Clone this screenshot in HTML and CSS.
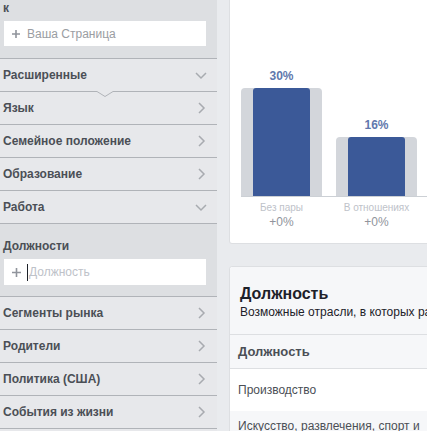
FILE: index.html
```html
<!DOCTYPE html>
<html lang="ru">
<head>
<meta charset="utf-8">
<title>Аудитория</title>
<link rel="stylesheet" href="styles.css">
</head>
<body>
<div class="page">
  <aside class="sidebar">
    <div class="section top-section">
      <div class="section-label">к</div>
      <div class="field">
        <svg class="plus" width="8" height="8" viewBox="0 0 8 8"><path d="M4 0v8M0 4h8" stroke="#90949c" stroke-width="1.6"/></svg>
        <span class="ph">Ваша Страница</span>
      </div>
    </div>
    <div class="row">Расширенные
      <svg class="chev" width="12" height="12" viewBox="0 0 12 12"><polyline points="1,4 6,9 11,4" fill="none" stroke="#a8abb0" stroke-width="1.5"/></svg>
      <svg class="notch" width="18" height="7" viewBox="0 0 18 7"><polygon points="0,0 18,0 18,1 9,6 0,1" fill="#e7e8eb"/><polyline points="0,0.5 1,0.5 9,5.5 17,0.5 18,0.5" fill="none" stroke="#b0b3b8" stroke-width="1"/></svg>
    </div>
    <div class="row">Язык
      <svg class="chev" width="12" height="12" viewBox="0 0 12 12"><polyline points="4,1 9,6 4,11" fill="none" stroke="#a8abb0" stroke-width="1.5"/></svg>
    </div>
    <div class="row">Семейное положение
      <svg class="chev" width="12" height="12" viewBox="0 0 12 12"><polyline points="4,1 9,6 4,11" fill="none" stroke="#a8abb0" stroke-width="1.5"/></svg>
    </div>
    <div class="row">Образование
      <svg class="chev" width="12" height="12" viewBox="0 0 12 12"><polyline points="4,1 9,6 4,11" fill="none" stroke="#a8abb0" stroke-width="1.5"/></svg>
    </div>
    <div class="row">Работа
      <svg class="chev" width="12" height="12" viewBox="0 0 12 12"><polyline points="1,4 6,9 11,4" fill="none" stroke="#a8abb0" stroke-width="1.5"/></svg>
    </div>
    <div class="section jobs-section">
      <div class="section-label big">Должности</div>
      <div class="field tall">
        <svg class="plus" width="9" height="9" viewBox="0 0 9 9"><path d="M4.5 0v9M0 4.5h9" stroke="#90949c" stroke-width="1.6"/></svg>
        <span class="caret"></span><span class="ph light">Должность</span>
      </div>
    </div>
    <div class="row">Сегменты рынка
      <svg class="chev" width="12" height="12" viewBox="0 0 12 12"><polyline points="4,1 9,6 4,11" fill="none" stroke="#a8abb0" stroke-width="1.5"/></svg>
    </div>
    <div class="row">Родители
      <svg class="chev" width="12" height="12" viewBox="0 0 12 12"><polyline points="4,1 9,6 4,11" fill="none" stroke="#a8abb0" stroke-width="1.5"/></svg>
    </div>
    <div class="row">Политика (США)
      <svg class="chev" width="12" height="12" viewBox="0 0 12 12"><polyline points="4,1 9,6 4,11" fill="none" stroke="#a8abb0" stroke-width="1.5"/></svg>
    </div>
    <div class="row">События из жизни
      <svg class="chev" width="12" height="12" viewBox="0 0 12 12"><polyline points="4,1 9,6 4,11" fill="none" stroke="#a8abb0" stroke-width="1.5"/></svg>
    </div>
  </aside>

  <main class="content">
    <section class="card chart-card">
      <div class="bars">
        <div class="bar-group">
          <div class="pct">30%</div>
          <div class="bar-bg" style="height:108px"><div class="bar"></div></div>
        </div>
        <div class="bar-group">
          <div class="pct">16%</div>
          <div class="bar-bg" style="height:59px"><div class="bar"></div></div>
        </div>
      </div>
      <div class="labels">
        <div class="label"><div class="cat">Без пары</div><div class="delta">+0%</div></div>
        <div class="label"><div class="cat">В отношениях</div><div class="delta">+0%</div></div>
      </div>
    </section>

    <section class="card table-card">
      <div class="tc-head">
        <div class="tc-title">Должность</div>
        <div class="tc-sub">Возможные отрасли, в которых ра</div>
      </div>
      <div class="th">Должность</div>
      <div class="tr">Производство</div>
      <div class="tr alt">Искусство, развлечения, спорт и медиа</div>
    </section>
  </main>
</div>
</body>
</html>
```

FILE: styles.css
```css
* { box-sizing: content-box; }

body {
  margin: 0;
  background: #e9ebee;
  font-family: "Liberation Sans", Arial, sans-serif;
  overflow: hidden;
}

.page {
  display: flex;
  width: 427px;
  height: 431px;
  overflow: hidden;
}

/* Sidebar */
.sidebar {
  width: 217px;
  flex-shrink: 0;
  background: #e7e8eb;
}

.section {
  background: #dddfe2;
  border-bottom: 1px solid #b0b3b8;
  padding: 2px 11px 12px 4px;
}

.jobs-section {
  padding: 14px 11px 11px 4px;
}

.section-label {
  font-weight: bold;
  font-size: 12px;
  line-height: 12px;
  color: #4b4f56;
  margin-left: -1px;
}

.section-label.big {
  line-height: 16px;
}

.field {
  background: #fff;
  height: 25px;
  margin-top: 7px;
  display: flex;
  align-items: center;
  padding-left: 8px;
  font-size: 12px;
}

.field.tall {
  height: 26px;
  margin-top: 5px;
}

.plus {
  margin-right: 7px;
  flex-shrink: 0;
}

.field.tall .plus {
  margin-right: 6px;
}

.caret {
  width: 1px;
  height: 17px;
  background: #1d2129;
  margin-right: 1px;
}

.ph {
  color: #9a9da2;
}

.ph.light {
  color: #bec2c9;
}

.row {
  position: relative;
  height: 32px;
  border-bottom: 1px solid #b0b3b8;
  display: flex;
  align-items: center;
  justify-content: space-between;
  padding: 0 10px 0 3px;
  font-weight: bold;
  font-size: 12px;
  color: #4b4f56;
}

.notch {
  position: absolute;
  left: 96px;
  top: 32px;
}

/* Content */
.content {
  flex-shrink: 0;
  margin-left: 12px;
  display: flex;
  flex-direction: column;
  gap: 22px;
}

.card {
  flex-shrink: 0;
  background: #fff;
  border: 1px solid #dddfe2;
  border-radius: 3px;
}

.chart-card {
  width: 260px;
  border-top: none;
  border-radius: 0 0 3px 3px;
  height: 243px;
  padding-left: 11px;
}

.bars {
  height: 196px;
  border-bottom: 1px solid #ccd0d5;
  display: flex;
  align-items: flex-end;
  gap: 14px;
}

.bar-group {
  width: 81px;
  display: flex;
  flex-direction: column;
  align-items: center;
}

.pct {
  font-weight: bold;
  font-size: 12px;
  line-height: 14px;
  color: #5f78ad;
  margin-bottom: 5px;
}

.bar-bg {
  width: 81px;
  background: #d3d6db;
  border-radius: 4px 4px 0 0;
  display: flex;
  justify-content: center;
}

.bar {
  width: 57px;
  height: 100%;
  background: #3b5998;
  border-radius: 3px 3px 0 0;
}

.labels {
  display: flex;
  gap: 14px;
  padding-top: 5px;
}

.label {
  width: 81px;
  text-align: center;
}

.cat {
  font-size: 10px;
  line-height: 12px;
  color: #bec2c9;
  white-space: nowrap;
}

.delta {
  font-size: 12px;
  line-height: 14px;
  color: #90949c;
  margin-top: 1px;
}

.table-card {
  width: 200px;
  height: 200px;
  overflow: hidden;
}

.tc-head {
  background: #f6f7f9;
  padding: 17px 10px 14px;
  border-bottom: 1px solid #dddfe2;
  border-radius: 3px 3px 0 0;
}

.tc-title {
  font-size: 16px;
  font-weight: bold;
  line-height: 20px;
  color: #1d2129;
}

.tc-sub {
  font-size: 12px;
  line-height: 16px;
  color: #1d2129;
  white-space: nowrap;
}

.th {
  background: #f6f7f9;
  height: 33px;
  line-height: 33px;
  padding-left: 8px;
  font-weight: bold;
  font-size: 13px;
  color: #4b4f56;
  border-bottom: 1px solid #dddfe2;
}

.tr {
  padding: 13px 8px;
  line-height: 16px;
  font-size: 12px;
  color: #4b4f56;
}

.tr.alt {
  background: #f6f7f9;
  padding-top: 7px;
}
```
